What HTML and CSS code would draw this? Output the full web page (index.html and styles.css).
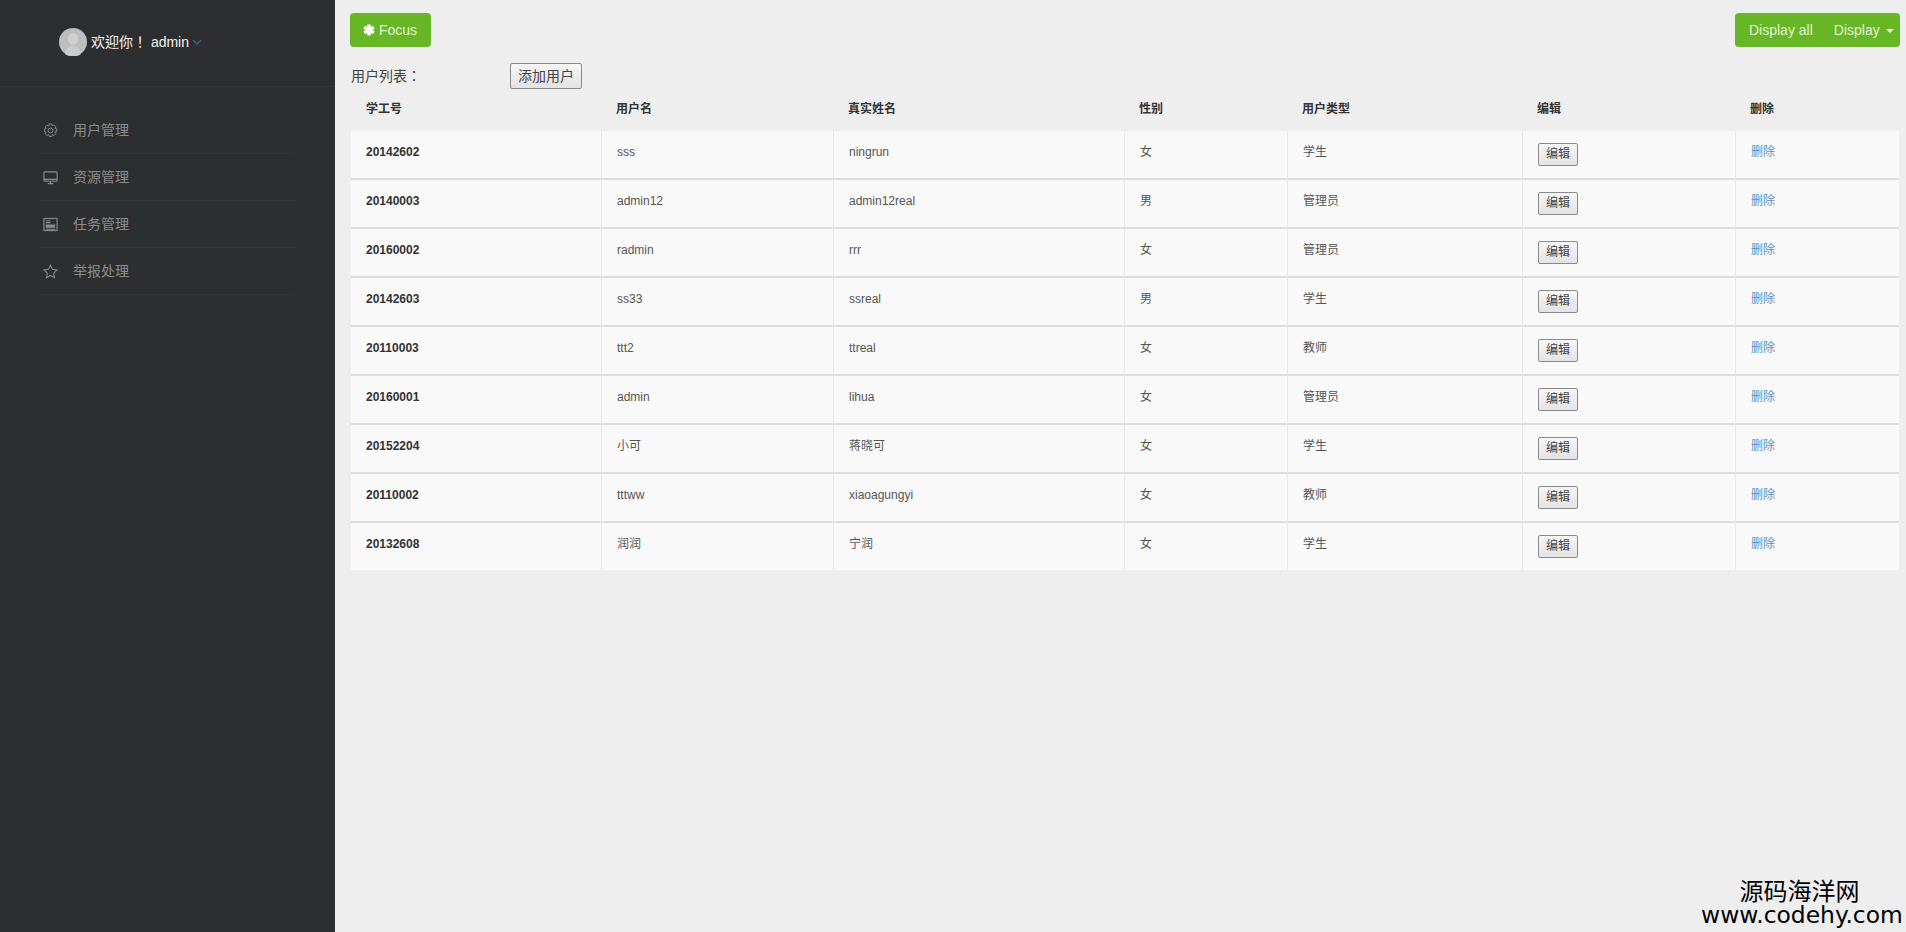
FILE: index.html
```html
<!DOCTYPE html>
<html lang="en">
<head>
  <meta charset="UTF-8">
  <meta name="viewport" content="width=device-width, initial-scale=1.0">
  <title>用户管理</title>
  <link rel="stylesheet" href="styles.css">
</head>
<body>
  <div class="sidebar">
    <div class="profile">
      <svg class="avatar" viewBox="0 0 28 28">
        <circle cx="14" cy="14" r="14" fill="#bdbdbd"/>
        <ellipse cx="14" cy="11" rx="5" ry="6" fill="#cfcfcf"/>
        <path d="M6 26c1-6 4-8 8-8s7 2 8 8a14 14 0 0 1-16 0z" fill="#cbcbcb"/>
      </svg>
      <span class="welcome">欢迎你！ admin</span>
      <svg class="chevron" viewBox="0 0 10 6"><path d="M1 1l4 4 4-4" fill="none" stroke="#3c5f86" stroke-width="1.6"/></svg>
    </div>
    <ul class="nav">
      <li>
        <svg class="nav-icon" viewBox="0 0 16 16" fill="none" stroke="#8b8b8b" stroke-width="1">
          <path d="M6.600 1h2.800l.5 2 1.800-1 2 2-1 1.800 2 .5v2.800l-2 .5 1 1.800-2 2-1.800-1-.5 2H6.600l-.5-2-1.800 1-2-2 1-1.800-2-.5V6.600l2-.5-1-1.800 2-2 1.800 1z"/>
          <circle cx="8" cy="8" r="2.600"/>
        </svg>
        用户管理
      </li>
      <li>
        <svg class="nav-icon" viewBox="0 0 16 16" fill="none" stroke="#8b8b8b" stroke-width="1.2">
          <rect x="1" y="2" width="14" height="10" rx="1"/>
          <path d="M1 10h14M5 14.500h6M8 12v2" />
        </svg>
        资源管理
      </li>
      <li>
        <svg class="nav-icon" viewBox="0 0 16 16" fill="none" stroke="#8b8b8b" stroke-width="1.2">
          <rect x="1" y="1.500" width="14" height="13"/>
          <path d="M3 4h5M3 6h5M3 13h10"/>
          <rect x="3" y="8" width="10" height="3.500" fill="#8b8b8b" stroke="none"/>
        </svg>
        任务管理
      </li>
      <li>
        <svg class="nav-icon" viewBox="0 0 16 16" fill="none" stroke="#8b8b8b" stroke-width="1.1">
          <path d="M8 1.200l2.100 4.500 4.900.6-3.600 3.400.9 4.900L8 12.200l-4.300 2.400.9-4.900L1 6.300l4.900-.6z"/>
        </svg>
        举报处理
      </li>
    </ul>
  </div>

  <div class="main">
    <div class="toolbar">
      <a class="green-btn focus-btn">
        <svg class="asterisk" viewBox="0 0 12 12"><path d="M6 .5v11M1.200 3.200l9.600 5.600M10.800 3.200l-9.600 5.600" stroke="#fff" stroke-width="3.400"/></svg>
        Focus
      </a>
      <div class="green-btn display-group">
        <a>Display all</a>
        <a>Display <span class="caret"></span></a>
      </div>
    </div>

    <div class="list-head">
      <span class="list-title">用户列表：</span>
      <button class="add-btn">添加用户</button>
    </div>

    <table class="user-table">
      <thead>
        <tr>
          <th class="col-id">学工号</th>
          <th class="col-name">用户名</th>
          <th class="col-real">真实姓名</th>
          <th class="col-sex">性别</th>
          <th class="col-type">用户类型</th>
          <th class="col-edit">编辑</th>
          <th class="col-del">删除</th>
        </tr>
      </thead>
      <tbody>
        <tr><td class="num">20142602</td><td>sss</td><td>ningrun</td><td>女</td><td>学生</td><td><button class="edit-btn">编辑</button></td><td><a class="del-link">删除</a></td></tr>
        <tr><td class="num">20140003</td><td>admin12</td><td>admin12real</td><td>男</td><td>管理员</td><td><button class="edit-btn">编辑</button></td><td><a class="del-link">删除</a></td></tr>
        <tr><td class="num">20160002</td><td>radmin</td><td>rrr</td><td>女</td><td>管理员</td><td><button class="edit-btn">编辑</button></td><td><a class="del-link">删除</a></td></tr>
        <tr><td class="num">20142603</td><td>ss33</td><td>ssreal</td><td>男</td><td>学生</td><td><button class="edit-btn">编辑</button></td><td><a class="del-link">删除</a></td></tr>
        <tr><td class="num">20110003</td><td>ttt2</td><td>ttreal</td><td>女</td><td>教师</td><td><button class="edit-btn">编辑</button></td><td><a class="del-link">删除</a></td></tr>
        <tr><td class="num">20160001</td><td>admin</td><td>lihua</td><td>女</td><td>管理员</td><td><button class="edit-btn">编辑</button></td><td><a class="del-link">删除</a></td></tr>
        <tr><td class="num">20152204</td><td>小可</td><td>蒋晓可</td><td>女</td><td>学生</td><td><button class="edit-btn">编辑</button></td><td><a class="del-link">删除</a></td></tr>
        <tr><td class="num">20110002</td><td>tttww</td><td>xiaoagungyi</td><td>女</td><td>教师</td><td><button class="edit-btn">编辑</button></td><td><a class="del-link">删除</a></td></tr>
        <tr><td class="num">20132608</td><td>润润</td><td>宁润</td><td>女</td><td>学生</td><td><button class="edit-btn">编辑</button></td><td><a class="del-link">删除</a></td></tr>
      </tbody>
    </table>
  </div>

  <div class="watermark">
    <div class="wm-cn">源码海洋网</div>
    <div class="wm-en">www.codehy.com</div>
  </div>
</body>
</html>
```

FILE: styles.css
```css
* {
  box-sizing: border-box;
}

body {
  font-family: "Liberation Sans", "Noto Sans CJK SC", sans-serif;
  font-size: 12px;
  line-height: 17px;
  color: #555;
  background-color: #eee;
  margin: 0;
  height: 932px;
  overflow: hidden;
  display: flex;
}

.sidebar {
  width: 335px;
  flex-shrink: 0;
  background-color: #2d2e30;
}

.profile {
  height: 87px;
  padding: 28px 0 0 59px;
  display: flex;
  align-items: flex-start;
  border-bottom: 1px solid #333436;
}

.avatar {
  width: 28px;
  height: 28px;
  flex-shrink: 0;
}

.welcome {
  font-family: "Liberation Sans", "Noto Sans CJK TC", sans-serif;
  color: #f5f5f5;
  font-size: 14px;
  line-height: 28px;
  margin-left: 4px;
  white-space: pre;
}

.chevron {
  width: 10px;
  height: 6px;
  margin: 11px 0 0 3px;
}

.nav {
  list-style: none;
  margin: 20px 40px 0;
  padding: 0;
}

.nav li {
  height: 47px;
  display: flex;
  align-items: center;
  padding-left: 3px;
  color: #8c8c8c;
  font-size: 14px;
  border-bottom: 1px solid #333436;
}

.nav-icon {
  width: 15px;
  height: 15px;
  margin-right: 15px;
  flex-shrink: 0;
}

.main {
  flex: 1;
  min-width: 0;
  padding: 13px 6px 0 15px;
}

.toolbar {
  display: flex;
  justify-content: space-between;
  height: 34px;
}

.green-btn {
  background-color: #67b626;
  color: #e4f5d0;
  font-size: 14px;
  line-height: 34px;
  border-radius: 4px;
}

.focus-btn {
  width: 81px;
  padding-left: 13px;
  display: flex;
  align-items: center;
}

.asterisk {
  width: 12px;
  height: 12px;
  margin-right: 4px;
}

.display-group {
  width: 165px;
  padding-left: 14px;
  line-height: 35px;
  display: flex;
  gap: 21px;
}

.caret {
  display: inline-block;
  border-top: 4px solid #e4f5d0;
  border-left: 4px solid transparent;
  border-right: 4px solid transparent;
  vertical-align: 2px;
  margin-left: 2px;
}

.list-head {
  height: 26px;
  margin-top: 16px;
  display: flex;
  align-items: center;
  padding-left: 1px;
}

.list-title {
  font-family: "Liberation Sans", "Noto Sans CJK TC", sans-serif;
  width: 159px;
  font-size: 14px;
  color: #444;
}

.add-btn {
  width: 72px;
  height: 26px;
  padding: 0;
  font: inherit;
  font-size: 14px;
  color: #444;
  background: linear-gradient(#f6f6f6, #e3e3e3);
  border: 1px solid #8a8a8a;
  border-radius: 2px;
}

.user-table {
  width: 1548px;
  margin-left: 1px;
  table-layout: fixed;
  border-collapse: separate;
  border-spacing: 0;
}

.col-id { width: 250px; }
.col-name { width: 232px; }
.col-real { width: 291px; }
.col-sex { width: 163px; }
.col-type { width: 235px; }
.col-edit { width: 213px; }
.col-del { width: 164px; }

.user-table th {
  height: 42px;
  padding: 0 15px 1px;
  text-align: left;
  color: #333;
  font-weight: bold;
}

.user-table td {
  height: 49px;
  padding: 12px 15px;
  line-height: 19px;
  vertical-align: top;
  background-color: #f9f9f9;
  border-left: 1px solid #eaeaea;
  border-bottom: 2px solid #ddd;
}

.user-table td:first-child {
  border-left: none;
}

.user-table tr:last-child td {
  height: 47px;
  border-bottom: none;
}

.user-table .num {
  font-weight: bold;
  color: #333;
}

.edit-btn {
  display: block;
  width: 40px;
  height: 23px;
  padding: 0;
  font: inherit;
  color: #444;
  background: linear-gradient(#f6f6f6, #e3e3e3);
  border: 1px solid #8a8a8a;
  border-radius: 2px;
}

.del-link {
  color: #5a8fc4;
}

.watermark {
  position: absolute;
  right: 5px;
  bottom: 6px;
  width: 200px;
  color: #000;
  text-align: center;
}

.wm-cn {
  font-size: 24px;
  line-height: 26px;
  margin-left: -3px;
}

.wm-en {
  font-family: "DejaVu Sans", sans-serif;
  font-size: 23.4px;
  line-height: 21px;
  white-space: nowrap;
}
```
